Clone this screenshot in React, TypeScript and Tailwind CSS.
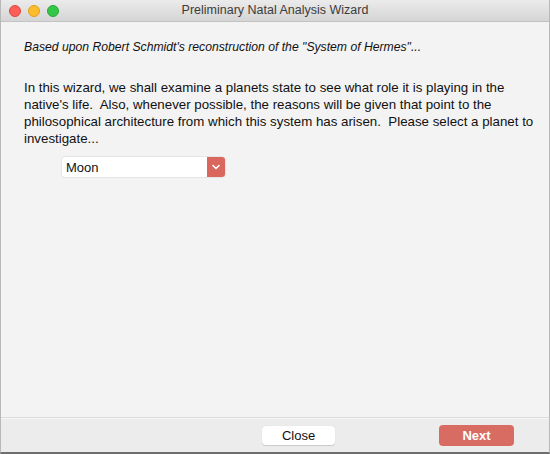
import { useState } from "react";

function TrafficLights() {
  return (
    <div className="flex items-center gap-[7px] pl-[8px]">
      <span className="w-[12px] h-[12px] rounded-full bg-[#fc5f57] border border-[#e2463f]" />
      <span className="w-[12px] h-[12px] rounded-full bg-[#fdbc2e] border border-[#e1a116]" />
      <span className="w-[12px] h-[12px] rounded-full bg-[#33c748] border border-[#27aa35]" />
    </div>
  );
}

export default function App() {
  const [planet, setPlanet] = useState("Moon");

  return (
    <div
      className="w-[550px] h-[454px] bg-[#ececec] flex flex-col border-l border-r border-[#b8b8b8] border-b-2 border-b-[#6e6e6e] text-[#111]"
      style={{ fontFamily: '"Liberation Sans", Arial, sans-serif' }}
    >
      {/* Title bar */}
      <div className="relative h-[22px] flex items-center bg-gradient-to-b from-[#ebebeb] to-[#d5d5d5] border-b border-[#c2c2c2]">
        <TrafficLights />
        <div className="absolute inset-0 flex items-center justify-center text-[12.5px] text-[#3c3c3c] pointer-events-none">
          Preliminary Natal Analysis Wizard
        </div>
      </div>

      {/* Body */}
      <div className="flex-1 bg-[#f3f3f3] border-b border-[#dcdcdc] pl-[23px] pr-[10px] pt-[17px] text-[13.3px] leading-[17px]">
        <p className="italic text-[12.2px]">Based upon Robert Schmidt's reconstruction of the "System of Hermes"...</p>
        <p className="mt-[23px]">
          In this wizard, we shall examine a planets state to see what role it is playing in the native's life.&nbsp; Also,
          whenever possible, the reasons will be given that point to the philosophical architecture from which this system
          has arisen.&nbsp; Please select a planet to investigate...
        </p>
        <div className="mt-[10px] ml-[38px] relative w-[163px] h-[20px]">
          <select
            value={planet}
            onChange={(e) => setPlanet(e.target.value)}
            className="appearance-none w-full h-full bg-white pl-[4px] pr-[22px] text-[13px] rounded-[3px] shadow-[0_0_0_0.5px_#d8d8d8] outline-none"
          >
            {["Sun", "Moon", "Mercury", "Venus", "Mars", "Jupiter", "Saturn"].map((p) => (
              <option key={p}>{p}</option>
            ))}
          </select>
          <div className="absolute right-0 top-0 h-full w-[18px] bg-[#d9675e] rounded-r-[3px] flex items-center justify-center pointer-events-none">
            <svg width="8" height="6" viewBox="0 0 8 6" fill="none">
              <path d="M1 1.5L4 4.5L7 1.5" stroke="white" strokeWidth="1.6" strokeLinecap="round" strokeLinejoin="round" />
            </svg>
          </div>
        </div>
      </div>

      {/* Footer */}
      <div className="h-[34px] flex items-center bg-[#ececec] border-t border-[#f7f7f7]">
        <button className="ml-[261px] w-[73px] h-[19px] bg-white rounded-[4px] text-[13px] shadow-[0_0.5px_1px_rgba(0,0,0,0.15)]">
          Close
        </button>
        <button className="ml-[104px] w-[75px] h-[21px] bg-[#d96c62] text-white rounded-[4px] text-[13px] font-bold">
          Next
        </button>
      </div>
    </div>
  );
}
